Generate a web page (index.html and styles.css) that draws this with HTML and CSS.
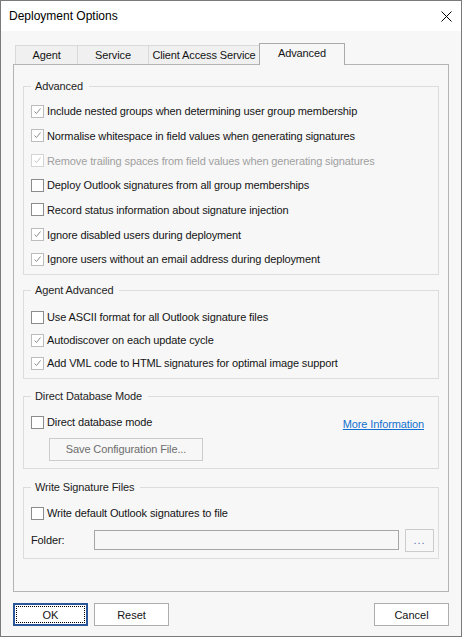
FILE: index.html
```html
<!DOCTYPE html>
<html lang="en">
<head>
  <meta charset="UTF-8">
  <meta name="viewport" content="width=device-width, initial-scale=1.0">
  <title>Deployment Options</title>
  <link rel="stylesheet" href="styles.css">
</head>
<body>
  <div class="window">
    <div class="titlebar">
      <span class="title">Deployment Options</span>
      <span class="close">
        <svg width="11" height="11" viewBox="0 0 11 11"><path d="M0.5 0.5L10.5 10.5M10.5 0.5L0.5 10.5" stroke="#000" stroke-width="1" fill="none"/></svg>
      </span>
    </div>

    <div class="content">
      <div class="tabs">
        <div class="tab tab-agent">Agent</div>
        <div class="tab tab-service">Service</div>
        <div class="tab tab-cas">Client Access Service</div>
        <div class="tab tab-advanced active">Advanced</div>
      </div>

      <div class="panel">
        <!-- Advanced -->
        <div class="group group-advanced">
          <div class="group-title">Advanced</div>
          <div class="row"><span class="box checked"><svg width="11" height="11" viewBox="0 0 11 11"><path d="M2.5 5.5L4.5 7.5L8.5 2.5" stroke="#8e8e8e" fill="none"/></svg></span>Include nested groups when determining user group membership</div>
          <div class="row"><span class="box checked"><svg width="11" height="11" viewBox="0 0 11 11"><path d="M2.5 5.5L4.5 7.5L8.5 2.5" stroke="#8e8e8e" fill="none"/></svg></span>Normalise whitespace in field values when generating signatures</div>
          <div class="row disabled"><span class="box checked"><svg width="11" height="11" viewBox="0 0 11 11"><path d="M2.5 5.5L4.5 7.5L8.5 2.5" stroke="#c4c4c4" fill="none"/></svg></span>Remove trailing spaces from field values when generating signatures</div>
          <div class="row"><span class="box"></span>Deploy Outlook signatures from all group memberships</div>
          <div class="row"><span class="box"></span>Record status information about signature injection</div>
          <div class="row"><span class="box checked"><svg width="11" height="11" viewBox="0 0 11 11"><path d="M2.5 5.5L4.5 7.5L8.5 2.5" stroke="#8e8e8e" fill="none"/></svg></span>Ignore disabled users during deployment</div>
          <div class="row"><span class="box checked"><svg width="11" height="11" viewBox="0 0 11 11"><path d="M2.5 5.5L4.5 7.5L8.5 2.5" stroke="#8e8e8e" fill="none"/></svg></span>Ignore users without an email address during deployment</div>
        </div>

        <!-- Agent Advanced -->
        <div class="group group-agent">
          <div class="group-title">Agent Advanced</div>
          <div class="row"><span class="box"></span>Use ASCII format for all Outlook signature files</div>
          <div class="row"><span class="box checked"><svg width="11" height="11" viewBox="0 0 11 11"><path d="M2.5 5.5L4.5 7.5L8.5 2.5" stroke="#8e8e8e" fill="none"/></svg></span>Autodiscover on each update cycle</div>
          <div class="row"><span class="box checked"><svg width="11" height="11" viewBox="0 0 11 11"><path d="M2.5 5.5L4.5 7.5L8.5 2.5" stroke="#8e8e8e" fill="none"/></svg></span>Add VML code to HTML signatures for optimal image support</div>
        </div>

        <!-- Direct Database Mode -->
        <div class="group group-database">
          <div class="group-title">Direct Database Mode</div>
          <div class="row"><span class="box"></span>Direct database mode<a href="#" class="more-info">More Information</a></div>
          <button class="btn-flat save-config">Save Configuration File...</button>
        </div>

        <!-- Write Signature Files -->
        <div class="group group-files">
          <div class="group-title">Write Signature Files</div>
          <div class="row"><span class="box"></span>Write default Outlook signatures to file</div>
          <div class="folder-row">
            <span class="folder-label">Folder:</span>
            <input type="text" class="folder-input" disabled>
            <button class="btn-flat browse">...</button>
          </div>
        </div>
      </div>

      <div class="buttons">
        <button class="btn btn-default">OK</button>
        <button class="btn">Reset</button>
        <button class="btn btn-cancel">Cancel</button>
      </div>
    </div>
  </div>
</body>
</html>
```

FILE: styles.css
```css
body {
  margin: 0;
  padding: 0;
  font-family: "Liberation Sans", Arial, sans-serif;
  font-size: 11px;
  letter-spacing: -0.12px;
  color: #141414;
}
.window {
  width: 462px;
  height: 637px;
  box-sizing: border-box;
  border: 1px solid #7a7a7a;
  background-color: #f7f7f7;
}
.titlebar {
  height: 30px;
  background-color: #ffffff;
  display: flex;
  align-items: center;
  padding-left: 8px;
  padding-right: 9px;
}
.title {
  font-size: 12px;
  letter-spacing: 0;
  color: #000;
}
.close {
  margin-left: auto;
  display: flex;
}
.content {
  padding: 0 12px;
}
/* Tabs */
.tabs {
  margin-top: 12px;
  height: 21px;
  display: flex;
  align-items: flex-end;
  padding-left: 2px;
}
.tab {
  height: 19px;
  box-sizing: border-box;
  border: 1px solid #d9d9d9;
  border-bottom: none;
  background-color: #f0f0f0;
  text-align: center;
  line-height: 18px;
  margin-left: -1px;
}
.tab-agent { width: 63px; margin-left: 0; }
.tab-service { width: 72px; }
.tab-cas { width: 112px; }
.tab-advanced { width: 86px; }
.tab.active {
  position: relative;
  z-index: 1;
  height: 22px;
  margin-bottom: -1px;
  background-color: #f7f7f7;
  border-color: #a9a9a9;
  line-height: 19px;
}
.panel {
  height: 528px;
  box-sizing: border-box;
  border: 1px solid #b4b4b4;
  padding: 21px 9px 0;
}
/* Group boxes */
.group {
  border: 1px solid #dcdcdc;
  padding: 0 4px 0 7px;
}
.group-title {
  width: fit-content;
  margin: -8px 0 8px 0;
  padding: 0 6px 0 4px;
  line-height: 14px;
  background-color: #f7f7f7;
  color: #1e1e1e;
}
.group-advanced { padding-bottom: 2px; }
.group-advanced .group-title { margin-bottom: 6px; }
.group-advanced .row { height: 24.67px; }
.group-agent { margin-top: 15px; padding-bottom: 3px; }
.group-agent .group-title { margin-bottom: 9px; }
.group-database { margin-top: 17px; padding-bottom: 7px; }
.group-files { margin-top: 18px; padding-bottom: 6px; }
.row {
  height: 23px;
  display: flex;
  align-items: center;
  white-space: nowrap;
}
.row.disabled {
  color: #a0a0a0;
}
.box {
  width: 13px;
  height: 13px;
  box-sizing: border-box;
  border: 1px solid #8c8c8c;
  background-color: #ffffff;
  margin-right: 3px;
  display: flex;
  flex-shrink: 0;
}
.box.checked {
  border-color: #bcbcbc;
}
.disabled .box {
  border-color: #d4d4d4;
}
.more-info {
  margin-left: auto;
  margin-right: 10px;
  padding-top: 3px;
  color: #1170cf;
  text-decoration: underline;
}
.btn-flat {
  font-family: inherit;
  font-size: 11px;
  letter-spacing: -0.12px;
  height: 23px;
  box-sizing: border-box;
  border: 1px solid #cccccc;
  background-color: #f7f7f7;
  color: #6d6d6d;
  padding: 0;
  display: block;
}
.save-config {
  width: 154px;
  margin: 4px 0 0 18px;
}
.folder-row {
  margin-top: 4px;
  height: 23px;
  display: flex;
  align-items: center;
}
.folder-label {
  width: 63px;
}
.folder-input {
  width: 305px;
  height: 20px;
  box-sizing: border-box;
  border: 1px solid #a6a6a6;
  background-color: #f7f7f7;
  margin: 0;
  padding: 0;
}
.browse {
  width: 29px;
  margin-left: 6px;
  color: #5a6fb0;
  letter-spacing: 1px;
}
/* Dialog buttons */
.buttons {
  margin-top: 11px;
  display: flex;
  gap: 6px;
}
.btn {
  font-family: inherit;
  font-size: 11px;
  width: 75px;
  height: 23px;
  box-sizing: border-box;
  border: 1px solid #adadad;
  background-color: #ffffff;
  color: #141414;
  padding: 0;
}
.btn-default {
  border: 2px solid #2b579a;
  outline: 1px dotted #000;
  outline-offset: -4px;
}
.btn-cancel {
  margin-left: auto;
}
```
